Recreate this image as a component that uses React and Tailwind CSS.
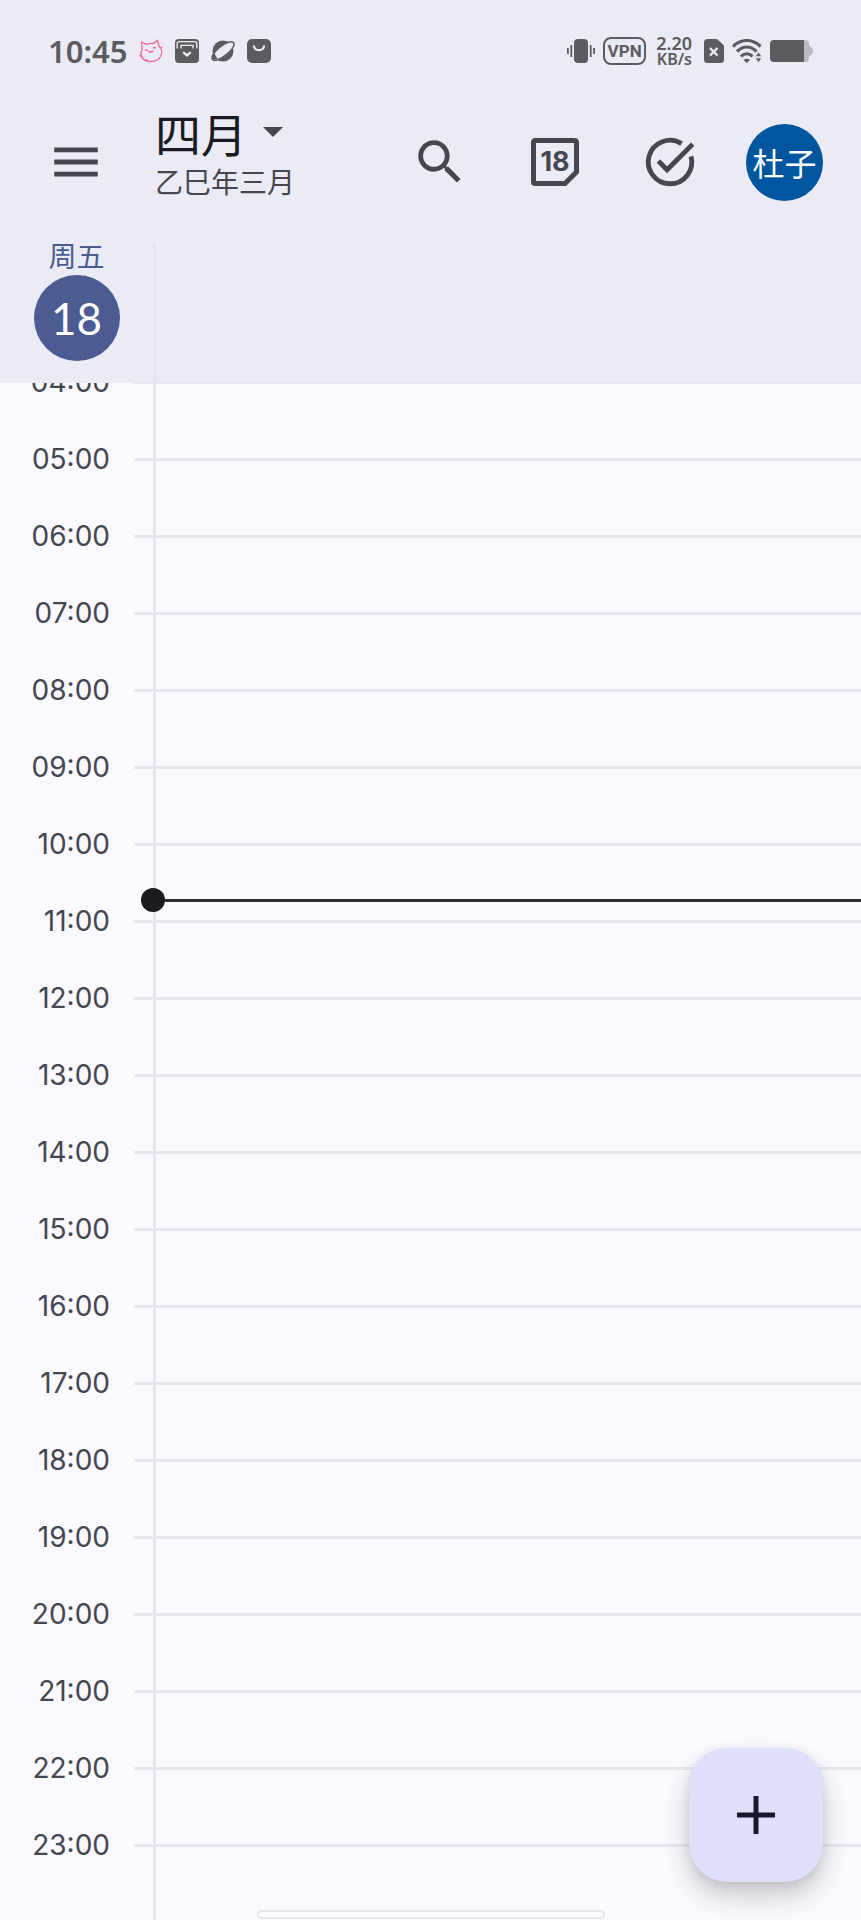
const HOURS = [
  "04:00", "05:00", "06:00", "07:00", "08:00", "09:00", "10:00",
  "11:00", "12:00", "13:00", "14:00", "15:00", "16:00", "17:00",
  "18:00", "19:00", "20:00", "21:00", "22:00", "23:00",
];

const ROW_HEIGHT = 77;
const NOW_HOURS = 6 + 45 / 60;

/* ─────────────────────────────
   Status bar
───────────────────────────── */
function StatusBar() {
  return (
    <div className="flex h-[102px] items-center justify-between pl-12 pr-12 text-[#5c5c60]">
      <div className="flex items-center gap-3">
        <span className="font-['Noto_Sans',sans-serif] text-[31px] font-semibold leading-9">10:45</span>

        {/* cat */}
        <svg className="h-6 w-6" viewBox="0 0 24 24" fill="none" stroke="#ee6d94" strokeWidth="1.4" strokeLinecap="round" strokeLinejoin="round">
          <path d="M3.2 10.5 2.6 3.2 7.6 5.4C9.6 4.4 12 4.2 14.4 4.6L18.4 1.2 20 7C22.6 9.4 23.4 13.6 21.8 17 20 21 15.6 22.6 11 22.4 6 22.2 2.4 19.6 2 15.4 1.8 13.6 2.4 11.8 3.2 10.5Z" />
          <path d="M6.6 11h1.8M14.4 8.8h2.2M9.6 12.4c.8 1.2 1.8 1 2.2-.2.8 1 1.8.8 2.2-.4M1 16.5l2 1.2M22.8 8.2l-1.2.8M7.4 22.4l.4-1.6" />
        </svg>

        {/* archive box */}
        <svg className="h-6 w-6" viewBox="0 0 24 24">
          <rect width="24" height="24" rx="4" fill="currentColor" />
          <path d="M2.2 9.5V5Q2.2 2.6 4.6 2.6H19.4Q21.8 2.6 21.8 5V9.5M6 9.5V6.4H18V9.5" fill="none" stroke="#ebebf5" strokeWidth="1.4" />
          <path d="M9 13.8 12 16.4l3-2.6" fill="none" stroke="#ebebf5" strokeWidth="2.4" strokeLinecap="round" />
        </svg>

        {/* planet */}
        <svg className="h-6 w-6 overflow-visible" viewBox="0 0 24 24">
          <circle cx="12" cy="12" r="10.5" fill="currentColor" />
          <ellipse cx="12" cy="12" rx="13.5" ry="5" transform="rotate(-38 12 12)" fill="#ebebf5" stroke="currentColor" strokeWidth="1.5" />
          <path d="M1.6 16C.2 20 2.4 21.8 6.5 19.8L3.4 14.5Z" fill="currentColor" />
        </svg>

        {/* shopping bag */}
        <svg className="h-6 w-6" viewBox="0 0 24 24">
          <rect width="24" height="24" rx="5" fill="currentColor" />
          <path d="M7 7.4c1 5 9 5 10 0" fill="none" stroke="#ebebf5" strokeWidth="2.2" strokeLinecap="round" />
        </svg>
      </div>

      <div className="flex items-center gap-2">
        {/* vibrate */}
        <svg className="h-6 w-7" viewBox="0 0 28 24" fill="currentColor">
          <rect x="7" width="14" height="24" rx="4" />
          <rect x="3.4" y="6" width="1.8" height="12" />
          <rect x="0" y="9" width="1.8" height="6" />
          <rect x="22.8" y="6" width="1.8" height="12" />
          <rect x="26.2" y="9" width="1.8" height="6" />
        </svg>

        <span className="flex h-7 w-[43px] items-center justify-center rounded-lg border-2 border-current font-['Roboto',sans-serif] text-[17px] font-bold leading-5">
          VPN
        </span>

        <div className="ml-0.5 text-right font-['Noto_Sans',sans-serif] font-semibold">
          <p className="text-[18px] leading-4">2.20</p>
          <p className="text-[16px] leading-4">KB/s</p>
        </div>

        {/* sim card */}
        <svg className="ml-1 h-6 w-5" viewBox="0 0 20 24">
          <path d="M3.5 0H13L20 6.5V20.5Q20 24 16.5 24H3.5Q0 24 0 20.5V3.5Q0 0 3.5 0Z" fill="currentColor" />
          <path d="M6 9l7.5 7.5M13.5 9l-7.5 7.5" stroke="#ebebf5" strokeWidth="2.4" />
        </svg>

        {/* wifi */}
        <svg className="h-6 w-[30px]" viewBox="0 0 30 24">
          <path d="M1 7.5C9-.5 20.5-.5 28.5 7.5" fill="none" stroke="currentColor" strokeWidth="3.2" />
          <path d="M5 12.5C11 6.5 18.5 6.5 24.5 12.5" fill="none" stroke="currentColor" strokeWidth="3.2" />
          <path d="M9 17.5C12.5 13.8 17 13.8 20.5 17.5" fill="none" stroke="currentColor" strokeWidth="3.2" />
          <path d="M11.5 21Q14.7 18.5 18 21L14.7 24Z" fill="currentColor" />
          <path d="M26.5 13l3.2 4.5h-6.4zM26.5 23.5l3.2-4.5h-6.4z" fill="currentColor" stroke="#ebebf5" strokeWidth=".6" />
        </svg>

        {/* battery */}
        <svg className="h-[22px] w-[43px]" viewBox="0 0 43 22">
          <path d="M34 0H35Q39 0 39 4V6Q43 7 43 11T39 16V18Q39 22 35 22H34Z" fill="#b9b9c0" />
          <path d="M4 0H34V22H4Q0 22 0 18V4Q0 0 4 0Z" fill="currentColor" />
        </svg>
      </div>
    </div>
  );
}

/* ─────────────────────────────
   App bar
───────────────────────────── */
function AppBar() {
  return (
    <header className="flex h-[120px] items-center pl-[47px] pr-[38px] text-[#45464f]">
      <button aria-label="菜单">
        <svg className="h-[58px] w-[58px]" viewBox="0 0 24 24" fill="currentColor">
          <path d="M3 18h18v-2H3v2zm0-5h18v-2H3v2zm0-7v2h18V6H3z" />
        </svg>
      </button>

      <button className="ml-[50px] pb-[18px] text-left font-['Noto_Sans_CJK_SC',sans-serif]">
        <span className="flex items-center gap-4 text-[46px] leading-[56px] text-[#1a1b21]">
          四月
          <svg className="h-[10px] w-5" viewBox="0 0 20 10" fill="#45464f">
            <path d="M0 0h20L10 10z" />
          </svg>
        </span>
        <span className="block text-[28px] leading-[42px]">乙巳年三月</span>
      </button>

      <div className="ml-auto flex items-center gap-[57px]">
        <button aria-label="搜索">
          <svg className="h-[58px] w-[58px]" viewBox="0 0 24 24" fill="currentColor">
            <path d="M15.5 14h-.79l-.28-.27C15.41 12.59 16 11.11 16 9.5 16 5.91 13.09 3 9.5 3S3 5.91 3 9.5 5.91 16 9.5 16c1.61 0 3.09-.59 4.23-1.57l.27.28v.79l5 4.99L20.49 19l-4.99-5zm-6 0C7.01 14 5 11.99 5 9.5S7.01 5 9.5 5 14 7.01 14 9.5 11.99 14 9.5 14z" />
          </svg>
        </button>

        <button className="relative flex h-[58px] w-[58px] items-center justify-center" aria-label="今天">
          <svg className="absolute h-12 w-12" viewBox="0 0 48 48" fill="none" stroke="currentColor" strokeWidth="5">
            <path d="M4.5 2.5H43.5Q45.5 2.5 45.5 4.5V34L34 45.5H4.5Q2.5 45.5 2.5 43.5V4.5Q2.5 2.5 4.5 2.5Z" />
          </svg>
          <span className="relative font-['Inter',sans-serif] text-[27px] font-bold leading-8">18</span>
        </button>

        <button aria-label="任务">
          <svg className="h-[58px] w-[58px]" viewBox="0 0 24 24" fill="none" stroke="currentColor" strokeWidth="2">
            <path d="M16.8 4.4A9 9 0 1 0 20.7 9.7" />
            <path d="M7.2 11.6 10.8 15.2 21.4 4.6" />
          </svg>
        </button>

        <button className="-ml-2.5 flex h-[77px] w-[77px] items-center justify-center rounded-full bg-[#00569e] font-['Noto_Sans_CJK_SC',sans-serif] text-[32px] leading-10 text-white">
          杜子
        </button>
      </div>
    </header>
  );
}

function DayHeader() {
  return (
    <div className="flex h-[161px]">
      <div className="flex w-[153px] flex-col items-center pt-[15px]">
        <span className="mb-0.5 font-['Noto_Sans_CJK_SC',sans-serif] text-[28px] leading-9 text-[#4c5b92]">周五</span>
        <span className="flex h-[86px] w-[86px] items-center justify-center rounded-full bg-[#4c5b92] font-['Lato',sans-serif] text-[44px] leading-[52px] text-white">
          18
        </span>
      </div>
      <div className="mt-[22px] flex-1 border-l-3 border-[#e4e4ed]" />
    </div>
  );
}

/* ─────────────────────────────
   Day grid
───────────────────────────── */
function DayGrid() {
  return (
    <main className="relative flex-1 overflow-hidden">
      <div className="relative -mt-0.5">
        {HOURS.map((hour) => (
          <div key={hour} className="flex h-[77px]">
            <time className="-mt-[17px] w-[110px] text-right font-['Inter',sans-serif] text-[28px] leading-9 text-[#45464f]">
              {hour}
            </time>
            <div className="ml-6 flex flex-1 border-t-3 border-[#e6e5ed] pl-[19px]">
              <div className="flex-1 border-l-3 border-[#e6e5ed]" />
            </div>
          </div>
        ))}

        {/* current time */}
        <div
          className="absolute right-0 left-[141px] flex -translate-y-1/2 items-center"
          style={{ top: Math.floor(NOW_HOURS * ROW_HEIGHT) }}
        >
          <span className="h-6 w-6 rounded-full bg-[#1a1b21]" />
          <span className="h-[3px] flex-1 bg-[#2e2f35]" />
        </div>
      </div>
    </main>
  );
}

export default function App() {
  return (
    <div className="relative flex h-screen flex-col bg-[#f9f9ff]">
      <div className="bg-[#ebebf5]">
        <StatusBar />
        <AppBar />
        <DayHeader />
      </div>
      <DayGrid />

      <button
        className="absolute right-[38px] bottom-[38px] flex h-[134px] w-[134px] items-center justify-center rounded-[38px] bg-[#dee0f9] shadow-[0_14px_24px_rgba(60,50,60,0.25),0_2px_8px_rgba(60,50,60,0.1)]"
        aria-label="新建"
      >
        <svg className="h-[38px] w-[38px]" viewBox="0 0 38 38" stroke="#171a2e" strokeWidth="5">
          <path d="M19 0v38M0 19h38" />
        </svg>
      </button>

      <div className="absolute bottom-px left-1/2 h-[9px] w-[348px] -translate-x-1/2 rounded-full border-2 border-[#e6e6ec] bg-[#fcfbff]" />
    </div>
  );
}
